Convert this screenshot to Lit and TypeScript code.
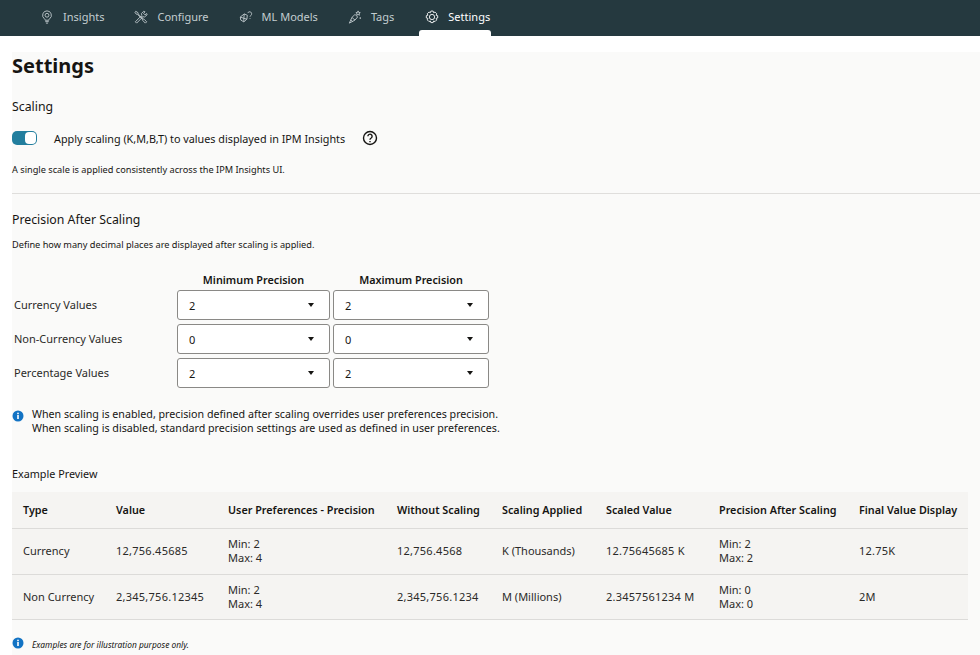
import { LitElement, css, html, svg } from "lit";
import { customElement } from "lit/decorators.js";

const navIcons = {
  insights: svg`<path d="M8 1a5 5 0 0 0-3 9c.6.5.9 1 .9 1.700h4.200c0-.7.3-1.200.9-1.700a5 5 0 0 0-3-9z"/><circle cx="8" cy="6" r="2.200"/><path d="M6 13.300h4M6.800 15h2.400"/>`,
  configure: svg`<path d="M1.500 13.500 8 7l1.500 1.500-6.500 6.500z"/><path d="M9 6.500 8.500 4l2.500-2.500 1.500.5-1.500 2 1.500 1.500 2-1.500.5 1.500L12 8l-2.500-.5"/><path d="M2 1.500 4.500 3l.3 1.500L10 10l1.500.5 3 3-1.500 1.500-3-3L9.500 10.500 4 5 2.500 4.700 1 2.500z"/>`,
  models: svg`<path d="M1.500 8 6 4.500l3.500 1.500-.5 4.500-3.500 3L2 11.500z"/><path d="M1.500 8l4 1.500 3.500 1M5.500 9.500l0 4M6 4.500l-.5 5"/><path d="M10 3.500a2.300 2.300 0 1 1 3.600 2.600c-.6.5-1 .9-1 1.600M12.600 9.300v.9"/>`,
  tags: svg`<path d="M1.500 15 4.500 8.500l3.500 3z"/><path d="M4.500 8.500 8 5l3 3-3 3.500M3.200 11.500l2.300 1.800"/><path d="M11.500 1l.7 1.800 1.800.2-1.400 1.200.4 1.800-1.500-1-1.500 1 .4-1.800L9 3l1.800-.2z"/><path d="M14 8.500v1.500M13.300 9.200h1.500"/>`,
  settings: svg`<circle cx="8" cy="8" r="3"/><path d="M6.700 1.200h2.600l.5 1.800 1.700-.6 1.900 1.900-.7 1.700 1.800.5v2.600l-1.800.5.7 1.700-1.900 1.900-1.700-.6-.5 1.800H6.700l-.5-1.800-1.700.6-1.900-1.900.7-1.700-1.800-.5V6.500l1.800-.5-.7-1.700 1.900-1.900 1.700.6z" stroke-linejoin="round"/>`,
};

const tabs = [
  { label: "Insights", icon: navIcons.insights },
  { label: "Configure", icon: navIcons.configure },
  { label: "ML Models", icon: navIcons.models },
  { label: "Tags", icon: navIcons.tags },
  { label: "Settings", icon: navIcons.settings, active: true },
];

const precisionRows = [
  { label: "Currency Values", min: "2", max: "2" },
  { label: "Non-Currency Values", min: "0", max: "0" },
  { label: "Percentage Values", min: "2", max: "2" },
];

const previewRows = [
  {
    type: "Currency",
    value: "12,756.45685",
    prefs: ["Min: 2", "Max: 4"],
    without: "12,756.4568",
    applied: "K (Thousands)",
    scaled: "12.75645685 K",
    after: ["Min: 2", "Max: 2"],
    final: "12.75K",
  },
  {
    type: "Non Currency",
    value: "2,345,756.12345",
    prefs: ["Min: 2", "Max: 4"],
    without: "2,345,756.1234",
    applied: "M (Millions)",
    scaled: "2.3457561234 M",
    after: ["Min: 0", "Max: 0"],
    final: "2M",
  },
];

const infoIcon = html`<svg class="info" viewBox="0 0 12 12">
  <circle cx="6" cy="6" r="5.500" fill="#1273c4"></circle>
  <rect x="5.200" y="5" width="1.600" height="4" fill="#fff"></rect>
  <rect x="5.200" y="2.700" width="1.600" height="1.500" fill="#fff"></rect>
</svg>`;

@customElement("app-root")
export class AppRoot extends LitElement {
  static styles = css`
    :host {
      display: block;
      height: 655px;
      overflow: hidden;
      background: #fff;
      color: #161513;
      font-family: "Noto Sans", "Open Sans", sans-serif;
      font-size: 11px;
    }
    .nav {
      display: flex;
      height: 36px;
      padding-left: 27px;
      background: #25393f;
      color: #c3cdd0;
      font-size: 11px;
    }
    .tab {
      position: relative;
      display: flex;
      align-items: center;
      gap: 9px;
      height: 33px;
      padding: 0 13px;
      margin-right: 4px;
    }
    .tab svg {
      width: 14px;
      height: 14px;
      fill: none;
      stroke: currentColor;
      stroke-width: 1;
    }
    .tab.active {
      margin-left: 1px;
      color: #fff;
    }
    .tab.active::after {
      content: "";
      position: absolute;
      left: 7px;
      right: 12px;
      bottom: -3px;
      height: 6px;
      background: #fff;
      border-radius: 3px 3px 0 0;
    }
    .content {
      margin: 16px 0 0 12px;
      height: 603px;
      background: #fafaf9;
    }
    h1 {
      margin: 0;
      font-size: 20px;
      line-height: 27px;
      font-weight: 700;
    }
    h2 {
      margin: 0;
      font-size: 12.300px;
      line-height: 18px;
      font-weight: 400;
    }
    .scaling-title {
      margin-top: 19px;
    }
    .toggle-row {
      display: flex;
      align-items: center;
      height: 18px;
      margin-top: 13px;
    }
    .toggle {
      position: relative;
      width: 25px;
      height: 14px;
      border-radius: 5px;
      background: #227e9e;
    }
    .toggle::after {
      content: "";
      position: absolute;
      right: 1px;
      top: 1px;
      width: 11px;
      height: 12px;
      border-radius: 4px;
      background: #fff;
    }
    .toggle-label {
      margin-left: 17px;
      font-size: 10.800px;
    }
    .help {
      width: 16px;
      height: 16px;
      margin-left: 17px;
    }
    .note {
      margin: 16px 0 0;
      font-size: 9.200px;
      line-height: 14px;
    }
    .rule {
      height: 1px;
      margin-top: 16px;
      background: #dfdedc;
    }
    .precision-title {
      margin-top: 17px;
    }
    .define {
      margin: 9px 0 0;
      font-size: 9.200px;
      line-height: 14px;
    }
    .grid {
      display: grid;
      grid-template-columns: 162px 153px 156px;
      grid-template-rows: 13px repeat(3, 30px);
      column-gap: 3px;
      row-gap: 4px;
      margin-top: 21px;
      align-items: center;
    }
    .head {
      font-size: 10.800px;
      line-height: 13px;
      font-weight: 600;
      text-align: center;
    }
    .row-label {
      padding: 0 0 2px 2px;
      font-size: 11px;
      color: #2b2a28;
    }
    .select {
      display: flex;
      align-items: center;
      justify-content: space-between;
      box-sizing: border-box;
      height: 30px;
      padding: 0 15px 0 11px;
      background: #fff;
      border: 1px solid #8a8986;
      border-radius: 3px;
      font-size: 11px;
    }
    .caret {
      width: 0;
      height: 0;
      border-left: 3.500px solid transparent;
      border-right: 3.500px solid transparent;
      border-top: 4px solid #161513;
    }
    .messages {
      display: flex;
      gap: 8px;
      margin-top: 19px;
    }
    .info {
      flex: none;
      width: 12px;
      height: 12px;
      margin-top: 3px;
    }
    .messages p {
      margin: 0;
      font-size: 10.700px;
      line-height: 14px;
    }
    .preview-title {
      margin-top: 32px;
      font-size: 10.800px;
      line-height: 14px;
    }
    table {
      width: 956px;
      margin-top: 11px;
      border-collapse: collapse;
      table-layout: fixed;
      background: #f5f4f2;
      font-size: 11px;
    }
    th {
      box-sizing: border-box;
      height: 36px;
      padding: 0 0 1px 11px;
      text-align: left;
      font-size: 10.800px;
      font-weight: 600;
      border-bottom: 1px solid #dcdbd9;
    }
    td {
      height: 45px;
      padding: 0 0 0 11px;
      border-bottom: 1px solid #dcdbd9;
      color: #2b2a28;
      line-height: 14px;
    }
    tbody tr:first-child td {
      box-sizing: border-box;
      height: 46px;
      padding-bottom: 1px;
    }
    tbody tr:last-child td {
      height: 44px;
    }
    td.num {
      letter-spacing: 0.25px;
    }
    .foot {
      display: flex;
      gap: 8px;
      margin-top: 19px;
      font-size: 8.400px;
      line-height: 12px;
      font-style: italic;
    }
    .foot .info {
      margin-top: -2px;
    }
  `;

  render() {
    return html`
      <nav class="nav">
        ${tabs.map(
          (t) => html`<div class="tab ${t.active ? "active" : ""}">
            <svg viewBox="0 0 16 16">${t.icon}</svg><span>${t.label}</span>
          </div>`
        )}
      </nav>
      <main class="content">
        <h1>Settings</h1>
        <h2 class="scaling-title">Scaling</h2>
        <div class="toggle-row">
          <div class="toggle"></div>
          <span class="toggle-label">Apply scaling (K,M,B,T) to values displayed in IPM Insights</span>
          <svg class="help" viewBox="0 0 16 16" fill="none" stroke="#161513" stroke-width="1.400">
            <circle cx="8" cy="8" r="6.500"></circle>
            <path d="M5.900 6.300a2.100 2.100 0 1 1 3.300 1.700c-.8.500-1.200.9-1.200 1.700"></path>
            <path d="M8 11v1.300"></path>
          </svg>
        </div>
        <p class="note">A single scale is applied consistently across the IPM Insights UI.</p>
        <div class="rule"></div>
        <h2 class="precision-title">Precision After Scaling</h2>
        <p class="define">Define how many decimal places are displayed after scaling is applied.</p>
        <div class="grid">
          <div></div>
          <div class="head">Minimum Precision</div>
          <div class="head">Maximum Precision</div>
          ${precisionRows.map(
            (r) => html`
              <div class="row-label">${r.label}</div>
              <div class="select"><span>${r.min}</span><i class="caret"></i></div>
              <div class="select"><span>${r.max}</span><i class="caret"></i></div>
            `
          )}
        </div>
        <div class="messages">
          ${infoIcon}
          <p>
            When scaling is enabled, precision defined after scaling overrides user preferences precision.<br />
            When scaling is disabled, standard precision settings are used as defined in user preferences.
          </p>
        </div>
        <div class="preview-title">Example Preview</div>
        <table>
          <colgroup>
            <col style="width:93px" />
            <col style="width:112px" />
            <col style="width:169px" />
            <col style="width:105px" />
            <col style="width:104px" />
            <col style="width:113px" />
            <col style="width:140px" />
            <col style="width:120px" />
          </colgroup>
          <thead>
            <tr>
              <th>Type</th>
              <th>Value</th>
              <th>User Preferences - Precision</th>
              <th>Without Scaling</th>
              <th>Scaling Applied</th>
              <th>Scaled Value</th>
              <th>Precision After Scaling</th>
              <th>Final Value Display</th>
            </tr>
          </thead>
          <tbody>
            ${previewRows.map(
              (r) => html`<tr>
                <td>${r.type}</td>
                <td class="num">${r.value}</td>
                <td>${r.prefs[0]}<br />${r.prefs[1]}</td>
                <td class="num">${r.without}</td>
                <td>${r.applied}</td>
                <td class="num">${r.scaled}</td>
                <td>${r.after[0]}<br />${r.after[1]}</td>
                <td class="num">${r.final}</td>
              </tr>`
            )}
          </tbody>
        </table>
        <div class="foot">${infoIcon}<span>Examples are for illustration purpose only.</span></div>
      </main>
    `;
  }
}
